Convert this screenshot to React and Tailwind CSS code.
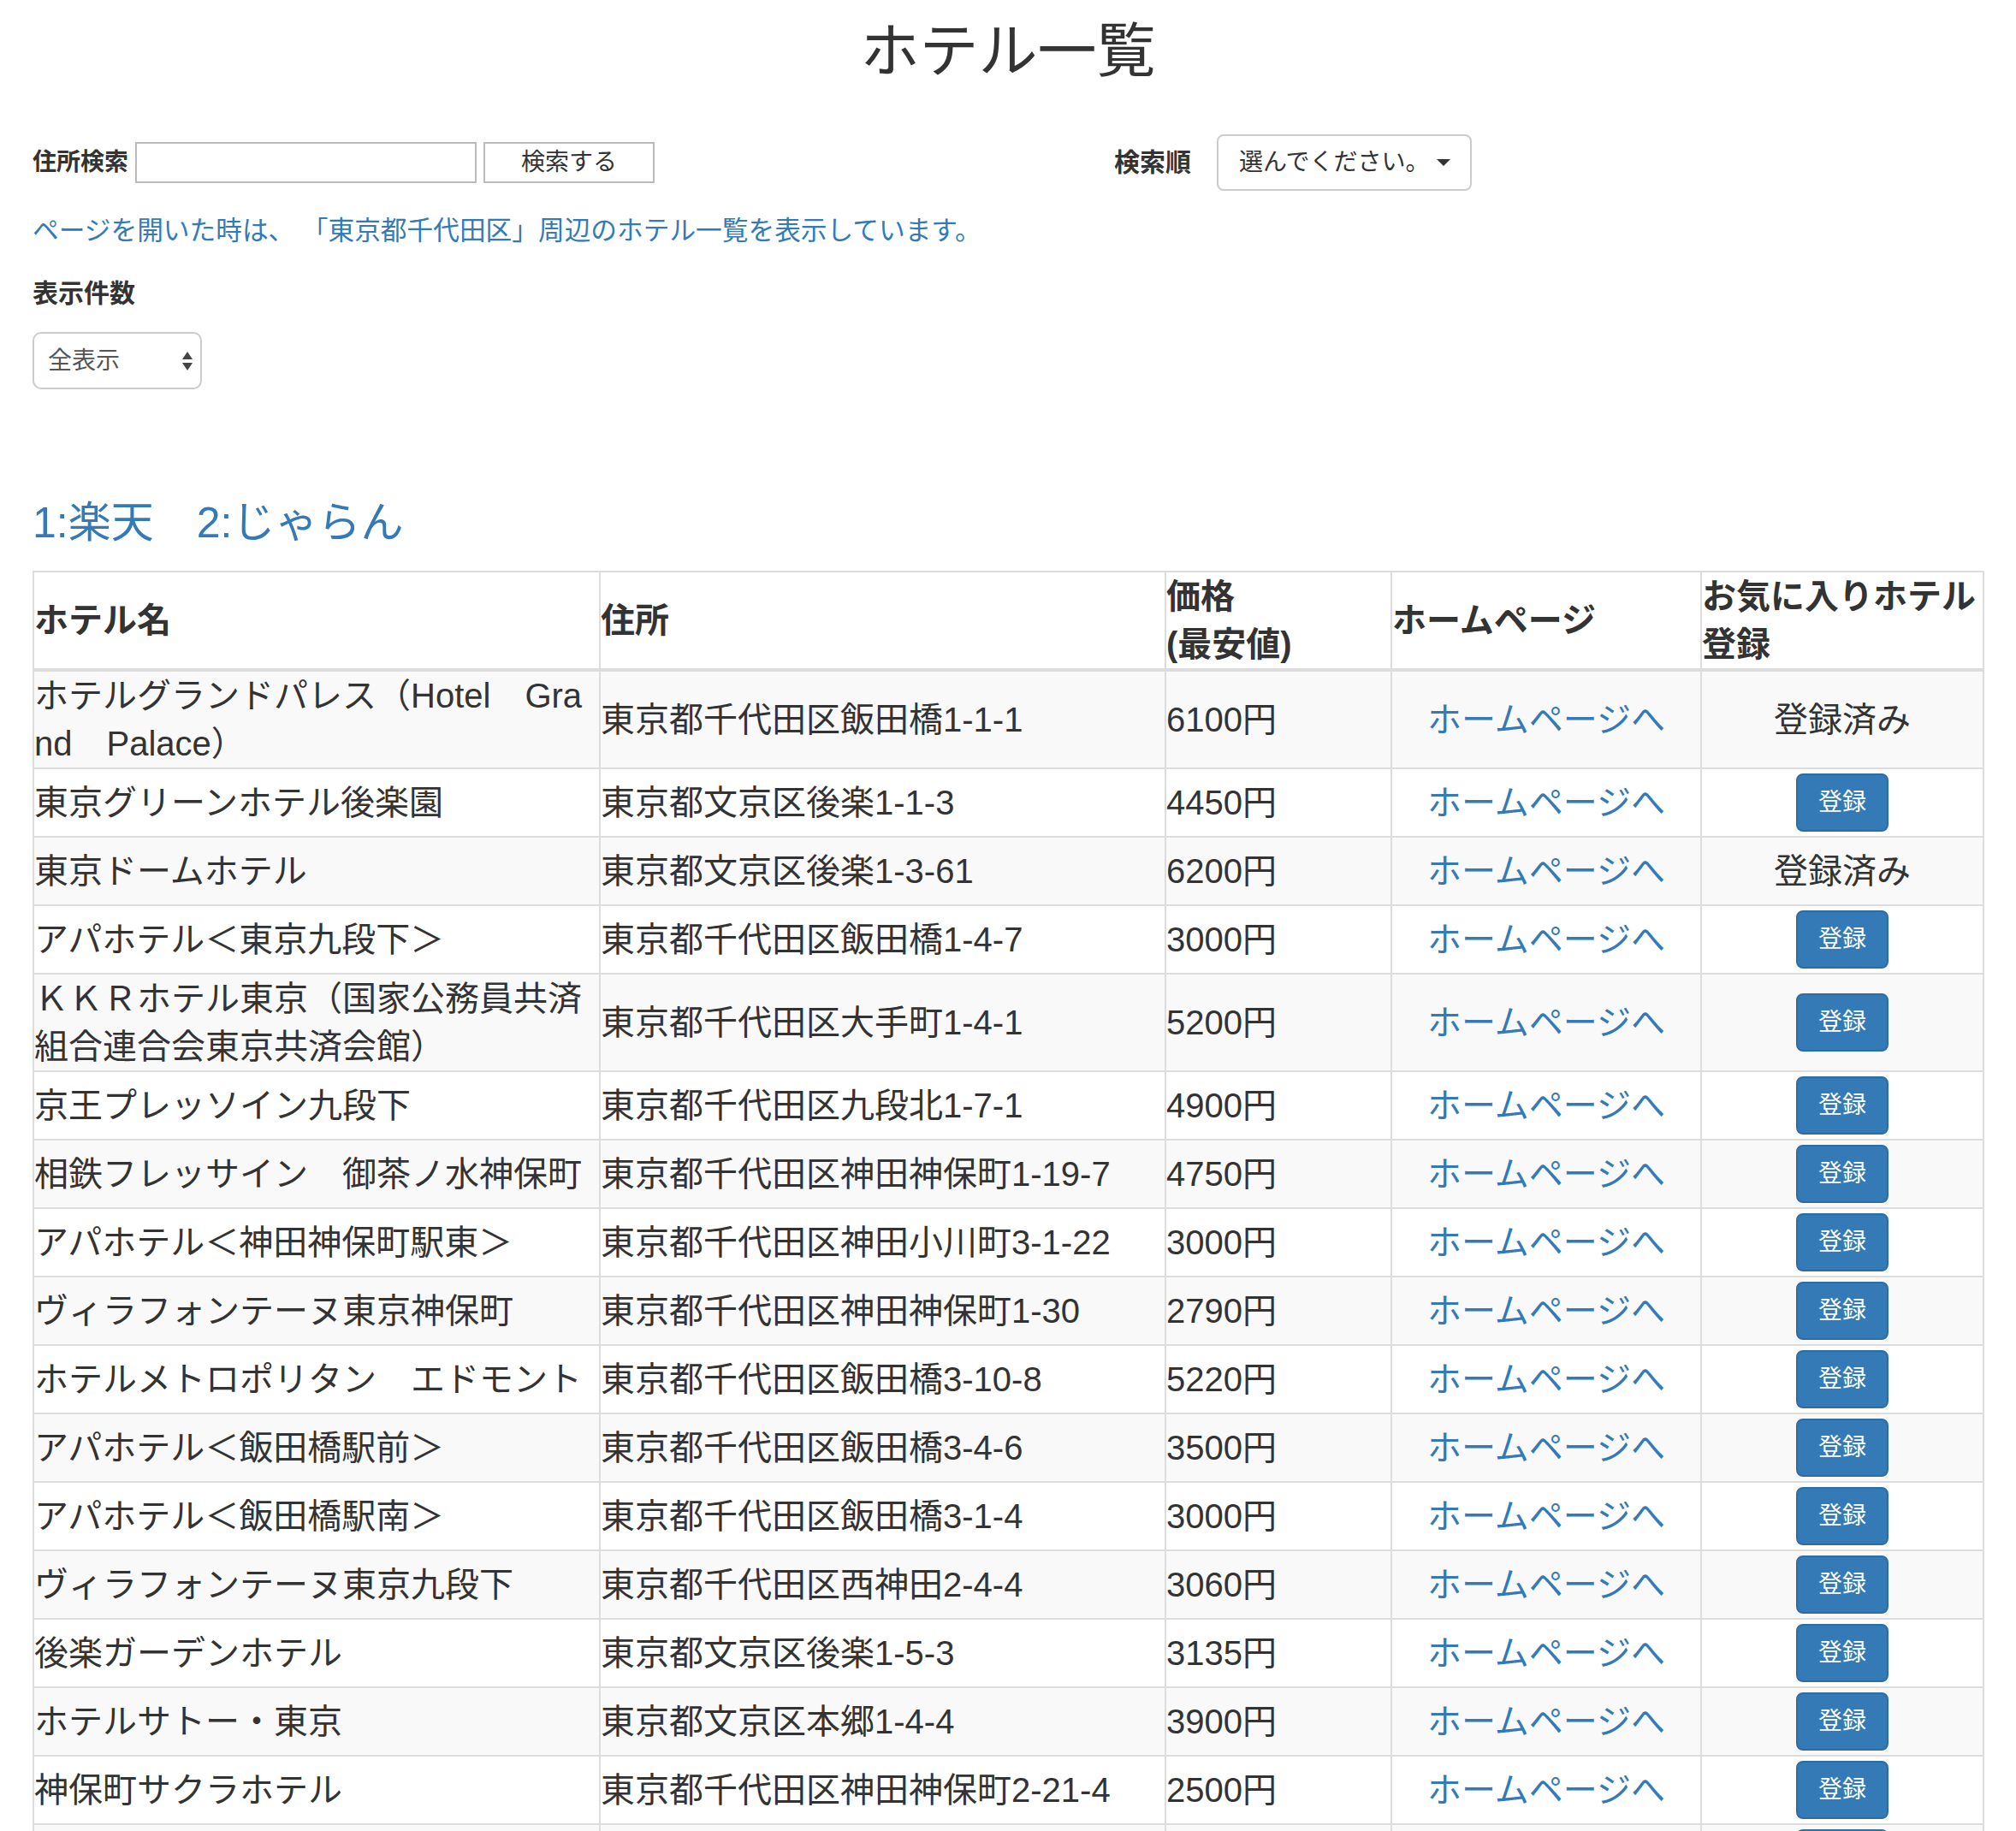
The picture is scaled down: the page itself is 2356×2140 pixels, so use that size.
import React from 'react'

const hotels = [
  ['ホテルグランドパレス（Hotel　Grand　Palace）', '東京都千代田区飯田橋1-1-1', '6100円', true],
  ['東京グリーンホテル後楽園', '東京都文京区後楽1-1-3', '4450円', false],
  ['東京ドームホテル', '東京都文京区後楽1-3-61', '6200円', true],
  ['アパホテル＜東京九段下＞', '東京都千代田区飯田橋1-4-7', '3000円', false],
  ['ＫＫＲホテル東京（国家公務員共済組合連合会東京共済会館）', '東京都千代田区大手町1-4-1', '5200円', false],
  ['京王プレッソイン九段下', '東京都千代田区九段北1-7-1', '4900円', false],
  ['相鉄フレッサイン　御茶ノ水神保町', '東京都千代田区神田神保町1-19-7', '4750円', false],
  ['アパホテル＜神田神保町駅東＞', '東京都千代田区神田小川町3-1-22', '3000円', false],
  ['ヴィラフォンテーヌ東京神保町', '東京都千代田区神田神保町1-30', '2790円', false],
  ['ホテルメトロポリタン　エドモント', '東京都千代田区飯田橋3-10-8', '5220円', false],
  ['アパホテル＜飯田橋駅前＞', '東京都千代田区飯田橋3-4-6', '3500円', false],
  ['アパホテル＜飯田橋駅南＞', '東京都千代田区飯田橋3-1-4', '3000円', false],
  ['ヴィラフォンテーヌ東京九段下', '東京都千代田区西神田2-4-4', '3060円', false],
  ['後楽ガーデンホテル', '東京都文京区後楽1-5-3', '3135円', false],
  ['ホテルサトー・東京', '東京都文京区本郷1-4-4', '3900円', false],
  ['神保町サクラホテル', '東京都千代田区神田神保町2-21-4', '2500円', false],
  ['ホテルグランドヒル市ヶ谷', '東京都新宿区市谷本村町4-1', '7000円', false],
]

function UpDownArrows() {
  return (
    <svg width="14" height="24" viewBox="0 0 14 24" className="shrink-0">
      <path d="M7 1 L13 10 L1 10 Z" fill="#444" />
      <path d="M7 23 L13 14 L1 14 Z" fill="#444" />
    </svg>
  )
}

export default function App() {
  const td = 'border-2 border-[#ddd] h-[80px] px-0 py-0 align-middle'
  const th = 'border-2 border-[#ddd] border-b-4 px-0 py-0 align-middle text-left font-bold'

  return (
    <div className="min-h-screen bg-white px-[38px] text-[#333] font-['Liberation_Sans','Noto_Sans_CJK_JP',sans-serif]">
      {/* Title */}
      <h1 className="pt-[21px] text-center text-[69px] leading-[79px] font-normal">ホテル一覧</h1>

      {/* Search row */}
      <div className="mt-[56px] flex h-[68px] items-center">
        <div className="flex w-[1264px] items-center">
          <label className="text-[28px] leading-[40px] font-bold">住所検索</label>
          <input type="text" className="ml-[8px] h-[48px] w-[399px] border-2 border-[#bbb] bg-white px-2 text-[28px] outline-none" />
          <button className="ml-[8px] h-[48px] w-[200px] border-2 border-[#bbb] bg-white text-[28px] leading-[40px] text-[#333]">
            検索する
          </button>
        </div>
        <div className="flex items-center">
          <label className="mr-[30px] text-[30px] leading-[40px] font-bold">検索順</label>
          <button className="flex h-[66px] w-[298px] items-center rounded-[8px] border-2 border-[#ccc] bg-white pl-[24px] text-[28px] leading-[40px] text-[#333]">
            <span>選んでください。</span>
            <span className="ml-[8px] h-0 w-0 border-x-[8px] border-t-[8px] border-x-transparent border-t-[#333]" />
          </button>
        </div>
      </div>

      {/* Note */}
      <p className="mt-[25px] text-[30.7px] leading-[42px] text-[#337ab7]">
        ページを開いた時は、 「東京都千代田区」周辺のホテル一覧を表示しています。
      </p>

      {/* Display count */}
      <div className="mt-[32px] text-[30px] leading-[40px] font-bold">表示件数</div>
      <div className="mt-[25px] flex h-[67px] w-[198px] items-center justify-between rounded-[10px] border-2 border-[#ccc] bg-white pl-[16px] pr-[8px]">
        <span className="text-[28px] leading-[40px] text-[#555]">全表示</span>
        <UpDownArrows />
      </div>

      {/* Source legend */}
      <h3 className="mt-[128px] text-[50px] leading-[57px] font-normal text-[#337ab7]">1:楽天　2:じゃらん</h3>

      {/* Table */}
      <table className="mt-[27px] w-full table-fixed border-collapse border-2 border-[#ddd] text-[40px] leading-[56px]">
        <colgroup>
          <col className="w-[662px]" />
          <col className="w-[661px]" />
          <col className="w-[264px]" />
          <col className="w-[362px]" />
          <col className="w-[330px]" />
        </colgroup>
        <thead>
          <tr>
            <th className={th}>ホテル名</th>
            <th className={th}>住所</th>
            <th className={th}>
              価格
              <br />
              (最安値)
            </th>
            <th className={th}>ホームページ</th>
            <th className={th}>お気に入りホテル登録</th>
          </tr>
        </thead>
        <tbody>
          {hotels.map(([name, address, price, registered], i) => (
            <tr key={i} className={i % 2 === 0 ? 'bg-[#f9f9f9]' : 'bg-white'}>
              <td className={`${td} break-all`}>{name}</td>
              <td className={td}>{address}</td>
              <td className={td}>{price}</td>
              <td className={`${td} text-center`}>
                <a href="#" className="text-[#337ab7]">ホームページへ</a>
              </td>
              <td className={`${td} text-center`}>
                {registered ? (
                  <span>登録済み</span>
                ) : (
                  <button className="rounded-[8px] border-2 border-[#2e6da4] bg-[#337ab7] px-[24px] py-[12px] text-[28px] leading-[40px] text-white align-middle">
                    登録
                  </button>
                )}
              </td>
            </tr>
          ))}
        </tbody>
      </table>
    </div>
  )
}
